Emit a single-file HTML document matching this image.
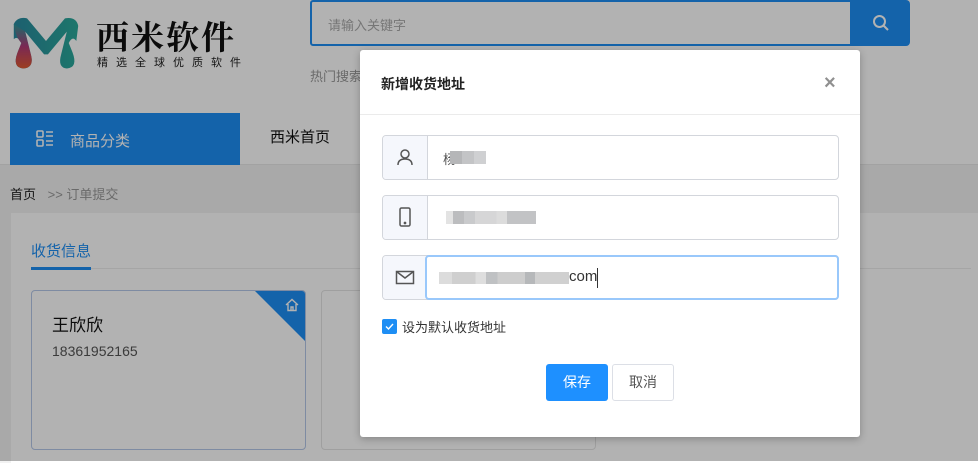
<!DOCTYPE html>
<html><head><meta charset="utf-8"><style>
*{box-sizing:border-box;margin:0;padding:0}
body{width:978px;height:461px;overflow:hidden;position:relative;background:#f2f2f2;font-family:"Liberation Sans","Noto Sans CJK SC",sans-serif}
.a{position:absolute}
</style></head><body>
<div class="a" style="left:0;top:0;width:978px;height:165px;background:#fff;border-bottom:1px solid #e8e8e8"></div>
<svg class="a" style="left:10px;top:14px" width="72" height="56" viewBox="0 0 76 58">
<defs><linearGradient id="g1" x1="0" y1="0" x2="0" y2="1"><stop offset="0" stop-color="#2a9a98"/><stop offset=".5" stop-color="#b03a78"/><stop offset="1" stop-color="#e05a30"/></linearGradient>
<linearGradient id="g2" x1="0" y1="0" x2="1" y2="0"><stop offset="0" stop-color="#2a8aa0"/><stop offset="1" stop-color="#2aaa9a"/></linearGradient></defs>
<path d="M4 10 Q8 2 18 4 L38 28 L58 4 Q70 2 72 12 L70 28 Q66 22 62 30 L66 40 Q72 56 60 57 Q50 56 54 42 L60 18 L40 42 L36 42 L16 18 L22 42 Q26 56 14 57 Q2 56 8 40 L12 30 Q8 22 4 26 Z" fill="url(#g2)"/>
<path d="M4 10 Q6 24 12 30 L8 40 Q2 56 14 57 Q26 56 22 42 L16 18 Z" fill="url(#g1)"/>
</svg>
<div class="a" style="left:96px;top:17px;font-size:33px;font-weight:bold;color:#111;letter-spacing:2px;font-family:'Noto Serif CJK SC',serif;line-height:38px">西米软件</div>
<div class="a" style="left:97px;top:57px;font-size:11px;color:#222;letter-spacing:8px;line-height:12px">精选全球优质软件</div>
<div class="a" style="left:310px;top:0;width:542px;height:46px;border:2px solid #1e8ef4;border-radius:3px 0 0 3px;background:#fff"></div>
<div class="a" style="left:328px;top:15px;font-size:13px;color:#aaa">请输入关键字</div>
<div class="a" style="left:852px;top:0;width:58px;height:46px;background:#1e8ef4;border-radius:0 4px 4px 0"></div>
<svg class="a" style="left:872px;top:14px" width="18" height="18" viewBox="0 0 18 18"><circle cx="7.5" cy="7.5" r="5.5" fill="none" stroke="#fff" stroke-width="2"/><path d="M11.5 11.5 L16 16" stroke="#fff" stroke-width="2"/></svg>
<div class="a" style="left:310px;top:66px;font-size:13px;color:#999">热门搜索</div>
<div class="a" style="left:10px;top:113px;width:230px;height:52px;background:#1e8ef4"></div>
<svg class="a" style="left:36px;top:130px" width="18" height="18" viewBox="0 0 18 18" fill="none" stroke="#fff" stroke-width="1.6"><rect x="1" y="1" width="6" height="6" rx="1"/><rect x="1" y="10" width="6" height="6" rx="1"/><path d="M10 2h7M10 6h7M10 11h7M10 15h7"/></svg>
<div class="a" style="left:70px;top:130px;font-size:15px;color:#fff">商品分类</div>
<div class="a" style="left:270px;top:126px;font-size:15px;color:#111">西米首页</div>
<div class="a" style="left:10px;top:184px;font-size:13px;color:#222">首页 <span style="color:#999;margin-left:8px">&gt;&gt; 订单提交</span></div>
<div class="a" style="left:11px;top:213px;width:967px;height:250px;background:#fff"></div>
<div class="a" style="left:31px;top:240px;font-size:15px;color:#1e8ef4">收货信息</div>
<div class="a" style="left:31px;top:268px;width:940px;height:1px;background:#ececec"></div>
<div class="a" style="left:31px;top:267px;width:60px;height:3px;background:#1e8ef4"></div>
<div class="a" style="left:31px;top:290px;width:275px;height:160px;border:1px solid #b5c8e8;border-radius:4px;overflow:hidden">
<div class="a" style="right:0;top:0;width:0;height:0;border-top:50px solid #1e8ef4;border-left:50px solid transparent"></div>
<svg class="a" style="right:6px;top:7px" width="14" height="14" viewBox="0 0 14 14" fill="none" stroke="#fff" stroke-width="1.4"><path d="M1 7 L7 1.5 L13 7 M3 6v6.5h8V6 M6 12.5V9h2v3.5"/></svg>
<div class="a" style="left:20px;top:20px;font-size:17px;color:#111">王欣欣</div>
<div class="a" style="left:20px;top:52px;font-size:14px;color:#555">18361952165</div>
</div>
<div class="a" style="left:321px;top:290px;width:275px;height:160px;border:1px solid #e4e4e4;border-radius:4px"></div>
<!-- overlay -->
<div class="a" style="left:0;top:0;width:978px;height:461px;background:rgba(0,0,0,.3)"></div>
<!-- modal -->
<div class="a" style="left:360px;top:50px;width:500px;height:387px;background:#fff;border-radius:3px;box-shadow:0 2px 8px rgba(0,0,0,.25)">
<div class="a" style="left:21px;top:24px;font-size:14px;font-weight:bold;color:#222">新增收货地址</div>
<div class="a" style="left:464px;top:21px;font-size:20px;color:#909090;font-weight:bold;line-height:24px">×</div>
<div class="a" style="left:0;top:64px;width:500px;height:1px;background:#ebebeb"></div>
</div>
<div class="a" style="left:382px;top:135px;width:457px;height:45px;border:1px solid #d3d6dc;border-radius:4px;background:#fff;overflow:hidden">
<div class="a" style="left:0;top:0;width:45px;height:43px;background:#f5f7fc;border-right:1px solid #d3d6dc"></div>
<svg class="a" style="left:13px;top:12px" width="18" height="18" viewBox="0 0 18 18" fill="none" stroke="#555" stroke-width="1.5"><circle cx="9" cy="6" r="4"/><path d="M2 17 Q2 11 9 11 Q16 11 16 17"/></svg>
<div class="a" style="left:60px;top:13px;font-size:13px;color:#555">杨</div>
<div class="a" style="left:67px;top:15px;width:36px;height:13px;background:linear-gradient(90deg,#b5b6b8 0 33%,#c3c4c6 33% 66%,#cfd0d2 66%)"></div>
</div>
<div class="a" style="left:382px;top:195px;width:457px;height:45px;border:1px solid #d3d6dc;border-radius:4px;background:#fff;overflow:hidden">
<div class="a" style="left:0;top:0;width:45px;height:43px;background:#f5f7fc;border-right:1px solid #d3d6dc"></div>
<svg class="a" style="left:14px;top:11px" width="16" height="22" viewBox="0 0 16 22" fill="none" stroke="#555" stroke-width="1.5"><rect x="3" y="1" width="10" height="18" rx="1.5"/><circle cx="8" cy="16" r=".6" fill="#555"/></svg>
<div class="a" style="left:63px;top:15px;width:90px;height:13px;background:linear-gradient(90deg,#e3e3e3 0 8%,#bcbdbf 8% 20%,#c9cacc 20% 32%,#d6d6d7 32% 56%,#dcdcdc 56% 68%,#c2c3c5 68%)"></div>
</div>
<div class="a" style="left:382px;top:255px;width:457px;height:45px;border:1px solid #d3d6dc;border-radius:4px;background:#fff;overflow:hidden">
<div class="a" style="left:0;top:0;width:45px;height:43px;background:#f5f7fc;border-right:1px solid #d3d6dc"></div>
<svg class="a" style="left:12px;top:14px" width="20" height="16" viewBox="0 0 20 16" fill="none" stroke="#555" stroke-width="1.5"><rect x="1.5" y="1.5" width="17" height="12"/><path d="M1.5 1.5 L10 8 L18.5 1.5"/></svg>
</div>
<div class="a" style="left:425px;top:255px;width:414px;height:45px;border:2px solid #99c8fb;border-radius:4px;background:#fff"></div>
<div class="a" style="left:439px;top:272px;width:130px;height:12px;background:linear-gradient(90deg,#dcdcdc 0 10%,#cfcfcf 10% 28%,#dedede 28% 36%,#bfc1c3 36% 45%,#cdcdcd 45% 66%,#b6b8ba 66% 74%,#d0d0d0 74%)"></div>
<div class="a" style="left:569px;top:268px;font-size:15px;color:#333">com</div>
<div class="a" style="left:597px;top:268px;width:1px;height:20px;background:#333"></div>
<div class="a" style="left:382px;top:319px;width:15px;height:15px;background:#1e8ef4;border-radius:2px"></div>
<svg class="a" style="left:384px;top:321px" width="11" height="11" viewBox="0 0 11 11"><path d="M2 5.5 L4.5 8 L9 3" fill="none" stroke="#fff" stroke-width="1.4"/></svg>
<div class="a" style="left:402px;top:317px;font-size:13px;color:#333">设为默认收货地址</div>
<div class="a" style="left:546px;top:364px;width:62px;height:37px;background:#1e90ff;border-radius:3px;color:#fff;font-size:14px;text-align:center;line-height:37px">保存</div>
<div class="a" style="left:612px;top:364px;width:62px;height:37px;border:1px solid #dcdfe6;border-radius:3px;color:#555;font-size:14px;text-align:center;line-height:35px;background:#fff">取消</div>
</body></html>
